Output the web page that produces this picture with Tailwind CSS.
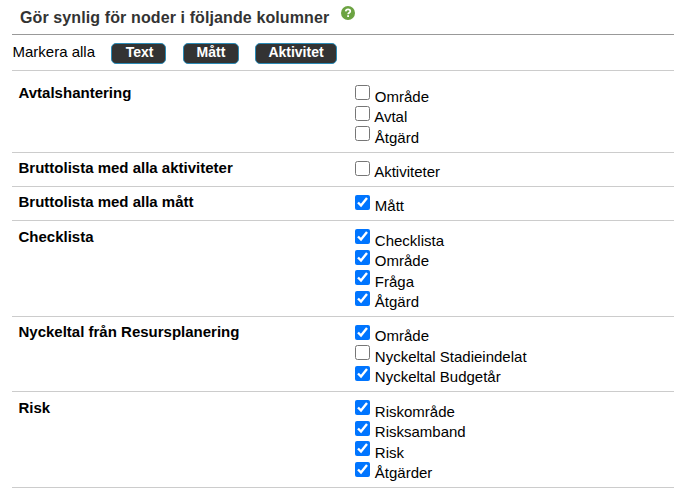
<!DOCTYPE html>
<html lang="sv">
<head>
    <meta charset="UTF-8">
    <meta name="viewport" content="width=device-width, initial-scale=1.0">
    <title>Synliga noder</title>
    <script src="https://cdn.jsdelivr.net/npm/@tailwindcss/browser@4"></script>
</head>
<body class="bg-white pl-3 text-[15px] text-black font-['Liberation_Sans',Arial,sans-serif] overflow-hidden">
    <div class="flex h-[35px] border-b border-[#999] pl-2">
        <h1 class="w-[321px] pt-2 text-base leading-5 font-bold tracking-[0.11px] text-[#333]">Gör synlig för noder i följande kolumner</h1>
        <svg class="mt-[6px] size-[14px]" viewBox="0 0 14 14">
            <circle cx="7" cy="7" r="7" fill="#6ca342"/>
            <path d="M4.7 5.4C4.8 3.9 5.8 3.3 7 3.3c1.4 0 2.3.8 2.3 1.9 0 1.5-2.2 1.5-2.2 3.1" fill="none" stroke="#fff" stroke-width="1.7"/>
            <rect x="6.2" y="9.2" width="1.8" height="1.8" fill="#fff"/>
        </svg>
    </div>
    <div class="flex h-9 border-b border-[#ccc]">
        <span class="w-[99px] pt-[7px] pl-[0.5px] leading-5">Markera alla</span>
        <div class="flex pt-2 text-sm font-bold text-white">
            <button class="mr-[17px] h-[21px] w-[55px] rounded-[5px] border border-[#2a8ab5] bg-[#333] pb-[2px] pl-[2px] leading-[17px]">Text</button>
            <button class="mr-4 h-[21px] w-[56px] rounded-[5px] border border-[#2a8ab5] bg-[#333] pb-[2px] leading-[17px]">Mått</button>
            <button class="h-[21px] w-[82px] rounded-[5px] border border-[#2a8ab5] bg-[#333] pb-[2px] leading-[17px]">Aktivitet</button>
        </div>
    </div>

    <div class="flex h-[82px] border-b border-[#ccc] pt-[14px] pl-[6.5px]">
        <h2 class="-mt-[2.3px] w-[336.5px] leading-5 font-bold">Avtalshantering</h2>
        <div>
            <label class="flex h-[20.55px] gap-[4.8px]"><input type="checkbox" class="size-[15px]"><span class="pt-[1.7px] leading-5">Område</span></label>
            <label class="flex h-[20.55px] gap-[4.2px]"><input type="checkbox" class="size-[15px]"><span class="pt-[1.7px] leading-5">Avtal</span></label>
            <label class="flex h-[20.55px] gap-[4.8px]"><input type="checkbox" class="size-[15px]"><span class="pt-[1.7px] leading-5">Åtgärd</span></label>
        </div>
    </div>
    <div class="flex h-[34px] border-b border-[#ccc] pt-[7.6px] pl-[6.5px]">
        <h2 class="-mt-[2.3px] w-[336.5px] leading-5 font-bold">Bruttolista med alla aktiviteter</h2>
        <div>
            <label class="flex h-[20.55px] gap-[4.2px]"><input type="checkbox" class="size-[15px]"><span class="pt-[1.7px] leading-5">Aktiviteter</span></label>
        </div>
    </div>
    <div class="flex h-[34px] border-b border-[#ccc] pt-[7.6px] pl-[6.5px]">
        <h2 class="-mt-[2.3px] w-[336.5px] leading-5 font-bold">Bruttolista med alla mått</h2>
        <div>
            <label class="flex h-[20.55px] gap-[4.8px]"><input type="checkbox" class="size-[15px]" checked><span class="pt-[1.7px] leading-5">Mått</span></label>
        </div>
    </div>
    <div class="flex h-24 border-b border-[#ccc] pt-2 pl-[6.5px]">
        <h2 class="-mt-[2.3px] w-[336.5px] leading-5 font-bold">Checklista</h2>
        <div>
            <label class="flex h-[20.55px] gap-[4.8px]"><input type="checkbox" class="size-[15px]" checked><span class="pt-[1.7px] leading-5">Checklista</span></label>
            <label class="flex h-[20.55px] gap-[4.8px]"><input type="checkbox" class="size-[15px]" checked><span class="pt-[1.7px] leading-5">Område</span></label>
            <label class="flex h-[20.55px] gap-[4.8px]"><input type="checkbox" class="size-[15px]" checked><span class="pt-[1.7px] leading-5">Fråga</span></label>
            <label class="flex h-[20.55px] gap-[4.8px]"><input type="checkbox" class="size-[15px]" checked><span class="pt-[1.7px] leading-5">Åtgärd</span></label>
        </div>
    </div>
    <div class="flex h-[75px] border-b border-[#ccc] pt-[7.6px] pl-[6.5px]">
        <h2 class="-mt-[2.3px] w-[336.5px] leading-5 font-bold">Nyckeltal från Resursplanering</h2>
        <div>
            <label class="flex h-[20.55px] gap-[4.8px]"><input type="checkbox" class="size-[15px]" checked><span class="pt-[1.7px] leading-5">Område</span></label>
            <label class="flex h-[20.55px] gap-[4.8px]"><input type="checkbox" class="size-[15px]"><span class="pt-[1.7px] leading-5">Nyckeltal Stadieindelat</span></label>
            <label class="flex h-[20.55px] gap-[4.8px]"><input type="checkbox" class="size-[15px]" checked><span class="pt-[1.7px] leading-5">Nyckeltal Budgetår</span></label>
        </div>
    </div>
    <div class="flex h-24 border-b border-[#ccc] pt-2 pl-[6.5px]">
        <h2 class="-mt-[2.3px] w-[336.5px] leading-5 font-bold">Risk</h2>
        <div>
            <label class="flex h-[20.55px] gap-[4.8px]"><input type="checkbox" class="size-[15px]" checked><span class="pt-[1.7px] leading-5">Riskområde</span></label>
            <label class="flex h-[20.55px] gap-[4.8px]"><input type="checkbox" class="size-[15px]" checked><span class="pt-[1.7px] leading-5">Risksamband</span></label>
            <label class="flex h-[20.55px] gap-[4.8px]"><input type="checkbox" class="size-[15px]" checked><span class="pt-[1.7px] leading-5">Risk</span></label>
            <label class="flex h-[20.55px] gap-[4.8px]"><input type="checkbox" class="size-[15px]" checked><span class="pt-[1.7px] leading-5">Åtgärder</span></label>
        </div>
    </div>
</body>
</html>
